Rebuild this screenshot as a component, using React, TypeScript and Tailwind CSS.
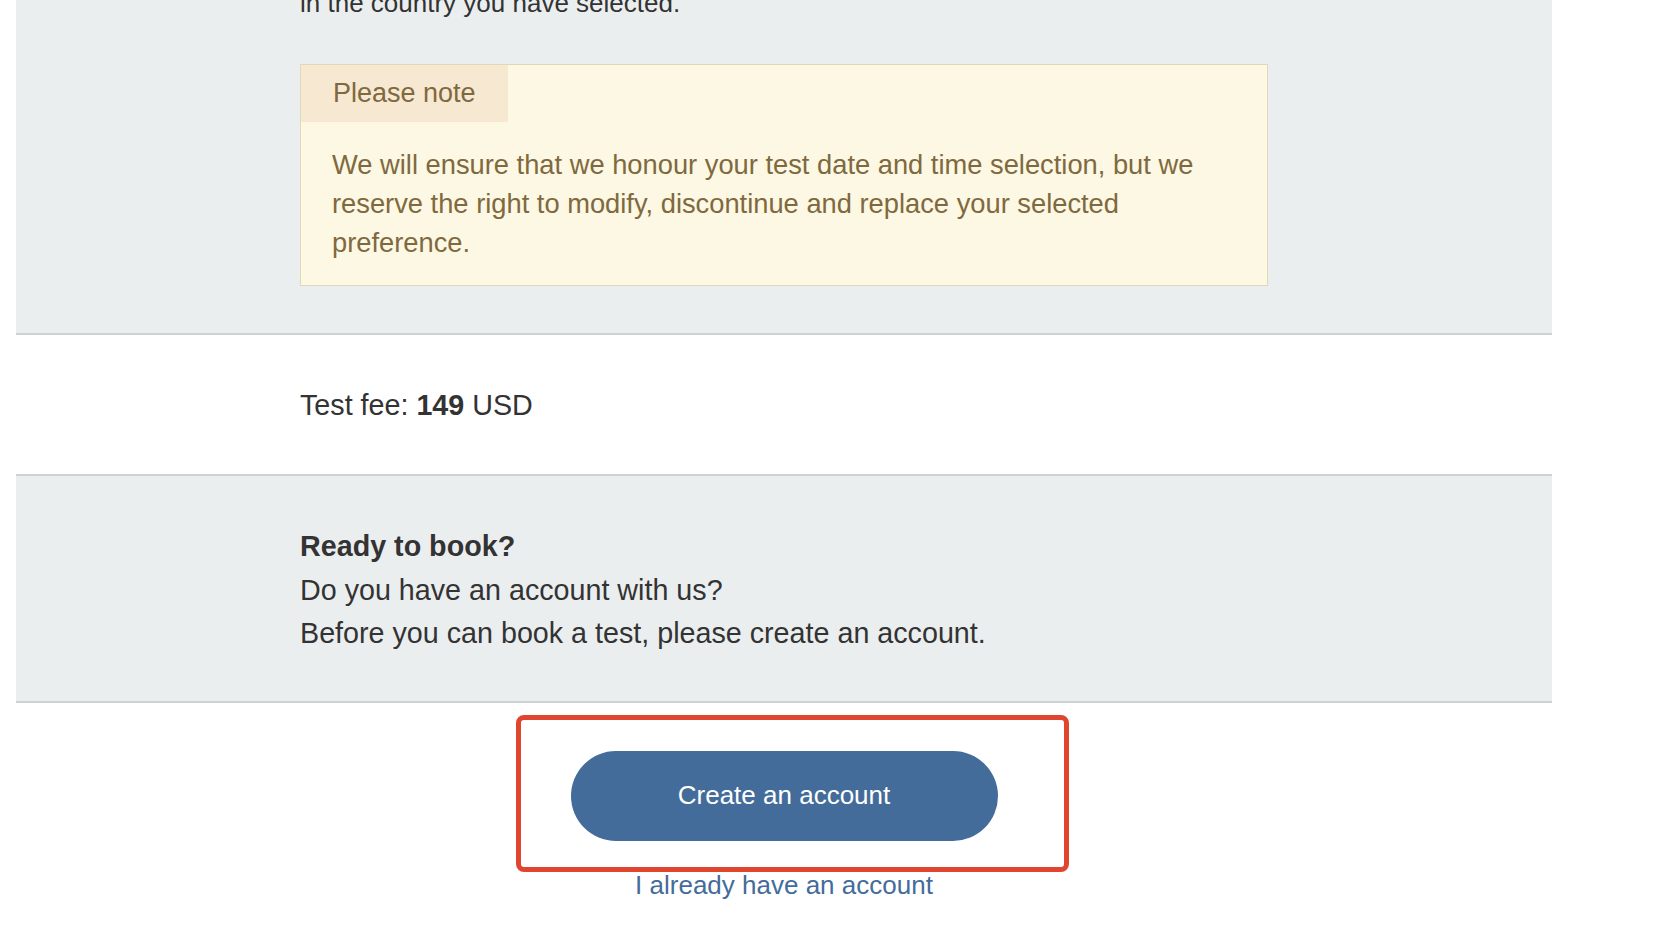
export default function App() {
  return (
    <div className="min-h-[926px] w-[1654px] overflow-hidden bg-white font-['Liberation_Sans',Arial,sans-serif] text-[#333333]">
      <div className="ml-[16px] w-[1536px]">
        {/* Info section */}
        <section className="border-b-2 border-[#cfd2d3] bg-[#ebeeef] pb-[47px]">
          <div className="mx-auto w-[968px]">
            <p className="mt-[-16px] text-[26px] leading-[39px]">
              in the country you have selected.
            </p>
            <div className="mt-[41px] border border-[#e3d8b6] bg-[#fcf8e3] text-[#80693f]">
              <div className="inline-block bg-[#f6e8d1] px-[32px] text-[27px] leading-[57px]">
                Please note
              </div>
              <p className="px-[31px] pb-[23px] pt-[23px] text-[27.3px] leading-[39px]">
                We will ensure that we honour your test date and time selection, but we reserve the right to modify,
                discontinue and replace your selected preference.
              </p>
            </div>
          </div>
        </section>

        {/* Fee */}
        <section className="border-b-2 border-[#cfd2d3] bg-white pt-[51px] pb-[49px]">
          <p className="mx-auto w-[968px] text-[28.7px] leading-[39px]">
            Test fee: <span className="font-bold">149</span> USD
          </p>
        </section>

        {/* Ready to book */}
        <section className="border-b-2 border-[#cfd2d3] bg-[#ebeeef] pt-[49px] pb-[45px]">
          <div className="mx-auto w-[968px] text-[28.7px] leading-[43.5px]">
            <p className="font-bold">Ready to book?</p>
            <p>Do you have an account with us?</p>
            <p>Before you can book a test, please create an account.</p>
          </div>
        </section>

        {/* Actions */}
        <div className="flex flex-col items-center pt-[48px]">
          <div className="relative">
            <button className="h-[90px] w-[427px] rounded-full bg-[#446c9a] text-[26px] text-white">
              Create an account
            </button>
            <div className="pointer-events-none absolute left-[-55px] right-[-71px] top-[-36px] bottom-[-31px] rounded-[8px] border-[5px] border-[#e0452f]" />
          </div>
          <a href="#" className="mt-[29px] text-[26px] leading-[30px] text-[#446c9a]">
            I already have an account
          </a>
        </div>
      </div>
    </div>
  );
}
